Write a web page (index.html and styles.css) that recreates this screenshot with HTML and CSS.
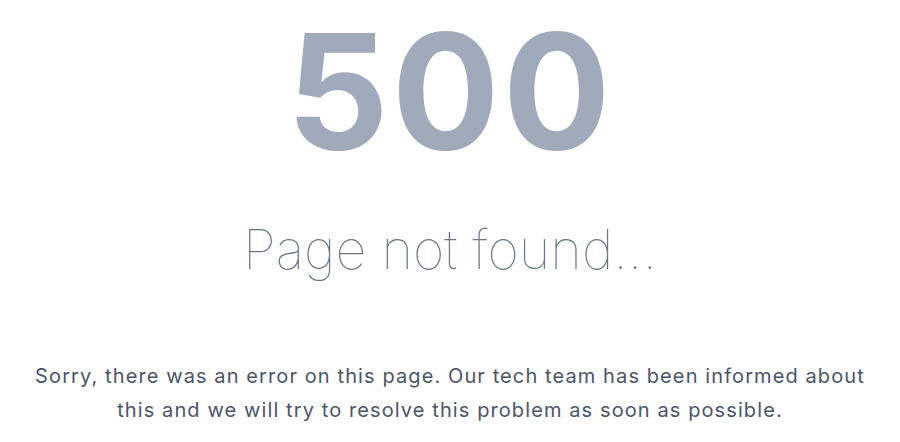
FILE: index.html
```html
<!DOCTYPE html>
<html lang="en">
<head>
<meta charset="utf-8">
<title>500</title>
<link rel="stylesheet" href="styles.css">
</head>
<body>
<main class="error">
  <h1 class="error-code">500</h1>
  <h2 class="error-title">Page not found...</h2>
  <p class="error-text">Sorry, there was an error on this page. Our tech team has been informed about this and we will try to resolve this problem as soon as possible.</p>
</main>
</body>
</html>
```

FILE: styles.css
```css
html, body {
  margin: 0;
  padding: 0;
  background: #ffffff;
}
body {
  font-family: Inter, "Noto Sans", sans-serif;
}
.error {
  display: flex;
  flex-direction: column;
  align-items: center;
  text-align: center;
  padding-top: 11px;
}
.error-code {
  margin: 0;
  font-size: 160px;
  line-height: 1;
  font-weight: 650;
  letter-spacing: 3px;
  color: #a0aabb;
}
.error-title {
  margin: 52px 0 0;
  font-size: 54px;
  line-height: 1;
  font-weight: 100;
  color: #6b7385;
}
.error-text {
  margin: 82px 0 0;
  max-width: 860px;
  font-size: 20px;
  line-height: 34px;
  font-weight: 400;
  letter-spacing: 1.1px;
  color: #4a5568;
}
```
